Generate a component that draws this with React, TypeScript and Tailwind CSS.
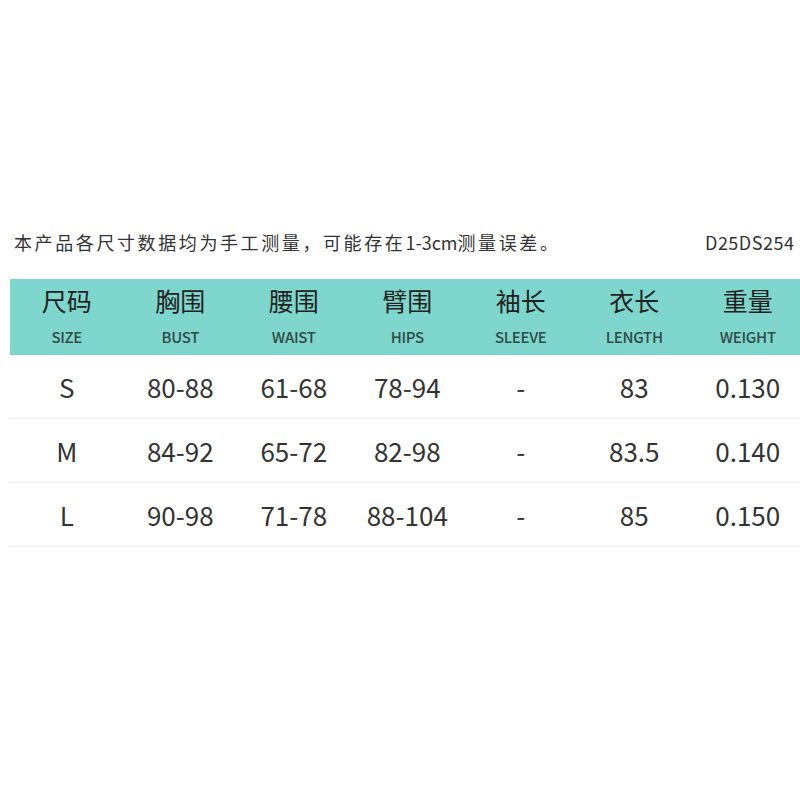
const font = "font-['Noto_Sans_CJK_SC','Noto_Sans',sans-serif]";

const columns = [
  { zh: "尺码", en: "SIZE" },
  { zh: "胸围", en: "BUST" },
  { zh: "腰围", en: "WAIST" },
  { zh: "臂围", en: "HIPS" },
  { zh: "袖长", en: "SLEEVE" },
  { zh: "衣长", en: "LENGTH" },
  { zh: "重量", en: "WEIGHT" },
  { zh: "", en: "" },
];

const rows = [
  ["S", "80-88", "61-68", "78-94", "-", "83", "0.130", ""],
  ["M", "84-92", "65-72", "82-98", "-", "83.5", "0.140", ""],
  ["L", "90-98", "71-78", "88-104", "-", "85", "0.150", ""],
];

export default function App() {
  return (
    <div className={`w-[800px] h-[800px] bg-white overflow-hidden text-[#333] ${font}`}>
      <div className="pt-[230px] flex items-center">
        <p className="ml-[14px] text-[18px] leading-[24px] whitespace-nowrap">
          <span className="tracking-[2.6px]">本产品各尺寸数据均为手工测量，可能存在</span>
          <span>1-3cm</span>
          <span className="tracking-[2.6px]">测量误差。</span>
        </p>
        <p className="ml-auto w-[95px] text-[18px] leading-[24px] tracking-[0.5px] whitespace-nowrap overflow-hidden">
          D25DS254
        </p>
      </div>

      <div className="mt-[25px] ml-[10px] w-[908px]">
        <div className="grid grid-cols-[repeat(8,113.5px)] h-[76px] bg-[#7fd6cc]">
          {columns.map((c, i) => (
            <div key={i} className="flex flex-col items-center pt-[6px]">
              <span className="text-[25px] leading-[30px] text-[#222]">{c.zh}</span>
              <span className="mt-[12px] text-[15px] leading-[20px] font-medium text-[#2f4a47] tracking-[-0.3px]">
                {c.en}
              </span>
            </div>
          ))}
        </div>

        {rows.map((r, i) => (
          <div
            key={i}
            className="grid grid-cols-[repeat(8,113.5px)] h-[64px] items-center border-b border-[#eeeeee] text-[26px] text-[#333]"
          >
            {r.map((v, j) => (
              <span key={j} className="text-center leading-[30px]">
                {v}
              </span>
            ))}
          </div>
        ))}
      </div>
    </div>
  );
}
